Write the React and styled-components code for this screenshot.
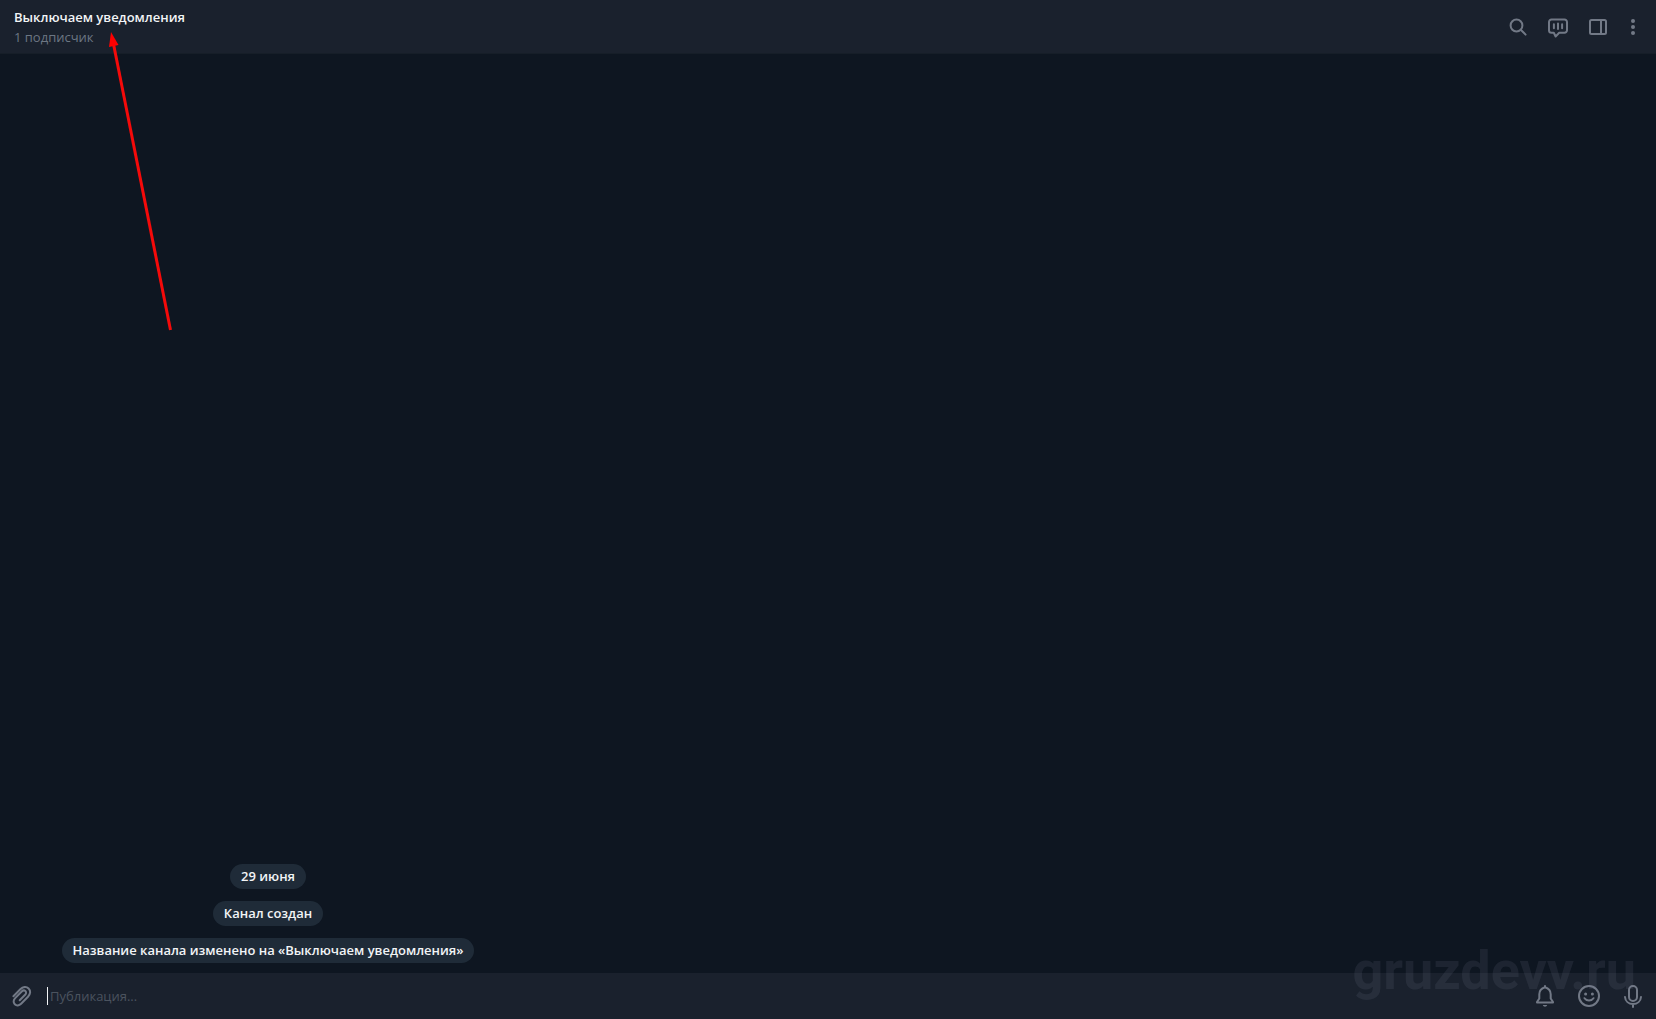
import { useState } from 'react';
import styled, { createGlobalStyle } from 'styled-components';

const GlobalStyle = createGlobalStyle`
  * {
    box-sizing: border-box;
  }
  body {
    margin: 0;
    background: #0e1621;
    font-family: 'Open Sans', 'Noto Sans', sans-serif;
    font-size: 13px;
    line-height: 18px;
  }
`;

const Page = styled.div`
  position: relative;
  display: flex;
  flex-direction: column;
  min-height: 100vh;
`;

const Header = styled.header`
  display: flex;
  align-items: center;
  justify-content: space-between;
  height: 54px;
  padding: 0 8px 0 14px;
  background: #1a212d;
  border-bottom: 1px solid #161e28;
`;

const ChannelInfo = styled.div`
  display: flex;
  flex-direction: column;
  gap: 2px;
`;

const Title = styled.h1`
  margin: 0;
  font-size: 13px;
  font-weight: 600;
  color: #f2f4f6;
`;

const Subtitle = styled.span`
  color: #6c7683;
`;

const Buttons = styled.div`
  display: flex;
  align-items: center;
`;

const IconButton = styled.button`
  display: flex;
  align-items: center;
  justify-content: center;
  width: ${({ $width }) => $width}px;
  height: 40px;
  padding: 0;
  border: none;
  background: none;
  color: #727986;
  cursor: pointer;
`;

const Icon = styled.svg`
  flex: none;
  width: 24px;
  height: 24px;
  fill: none;
  stroke: currentColor;
  stroke-width: 2;
  stroke-linecap: round;
  stroke-linejoin: round;
`;

const History = styled.main`
  display: flex;
  flex: 1;
  flex-direction: column;
  justify-content: flex-end;
  align-items: flex-start;
  padding-bottom: 10px;
`;

const MessageList = styled.div`
  display: flex;
  flex-direction: column;
  align-items: center;
  gap: 12px;
  width: 100%;
  max-width: 536px;
`;

const ServiceMessage = styled.div`
  padding: 3px 11px 4px;
  border-radius: 13px;
  background: #1f2b38;
  color: #f2f4f6;
  font-weight: 600;
`;

const Composer = styled.form`
  display: flex;
  align-items: center;
  height: 46px;
  padding: 0 1px;
  background: #1a212d;
`;

const Caret = styled.span`
  width: 1px;
  height: 18px;
  margin-left: 4px;
  background: #f2f4f6;
`;

const MessageInput = styled.input`
  flex: 1;
  min-width: 0;
  height: 40px;
  padding: 0 2px;
  border: none;
  outline: none;
  background: none;
  color: #f2f4f6;
  font: inherit;
  &::placeholder {
    color: #4b535f;
    opacity: 1;
  }
`;

const Arrow = styled.svg`
  position: absolute;
  top: 32px;
  left: 100px;
  width: 80px;
  height: 300px;
  pointer-events: none;
`;

const Watermark = styled.div`
  position: absolute;
  right: 20px;
  bottom: 18px;
  color: rgba(120, 130, 150, 0.14);
  font-family: Roboto, 'Liberation Sans', sans-serif;
  font-size: 54px;
  font-weight: 700;
  line-height: 60px;
  pointer-events: none;
`;

const SearchIcon = () => (
  <Icon viewBox="0 0 24 24">
    <circle cx="10.5" cy="10.5" r="5.9" />
    <path d="M15 15l4.6 4.6" />
  </Icon>
);

const VoiceChatIcon = () => (
  <Icon viewBox="0 0 24 24">
    <path d="M5.500 4.500h13a2.500 2.500 0 0 1 2.500 2.500v8.300a2.500 2.500 0 0 1-2.500 2.500h-5.300l-3.600 3.700-1.800-3.700H5.500A2.500 2.500 0 0 1 3 15.300V7A2.500 2.500 0 0 1 5.500 4.500z" />
    <path d="M7.900 9.300v4M12 8.500v5.600M16.100 9.300v4" />
  </Icon>
);

const SidePanelIcon = () => (
  <Icon viewBox="0 0 24 24">
    <rect x="4" y="5" width="16" height="14" rx="1.5" />
    <path d="M15 5v14" />
  </Icon>
);

const MenuIcon = () => (
  <Icon viewBox="0 0 24 24">
    <g fill="currentColor" stroke="none">
      <circle cx="12" cy="6" r="2" />
      <circle cx="12" cy="12" r="2" />
      <circle cx="12" cy="18" r="2" />
    </g>
  </Icon>
);

const AttachIcon = () => (
  <Icon viewBox="0 0 24 24">
    <path d="M3.4 12.2l6.9-6.9c2.6-2.6 6-3 8.3-.8s2 5.6-.6 8.2l-6.9 7.1c-1.9 1.9-4.6 2.2-6.3.5s-1.5-4.3.4-6.2l6.5-6.6c1.2-1.2 2.7-1.3 3.7-.4s.9 2.5-.3 3.7l-5.4 5.5" />
  </Icon>
);

const BellIcon = () => (
  <Icon viewBox="0 0 24 24">
    <path d="M12 3.2c-3.6 1-5.7 3.5-5.7 7.1v4.2L4 18v.5h16V18l-2.3-3.5v-4.2c0-3.6-2.1-6.1-5.7-7.1z" />
    <path d="M12 2v1" />
    <path
      d="M9.8 21h4.4c-.4 1.2-1.2 1.7-2.2 1.7s-1.8-.5-2.2-1.7z"
      fill="currentColor"
      stroke="none"
    />
  </Icon>
);

const SmileIcon = () => (
  <Icon viewBox="0 0 24 24">
    <circle cx="12" cy="12" r="10" />
    <path d="M7.5 14.2c2 3 7 3 9 0" />
    <g fill="currentColor" stroke="none">
      <circle cx="8.6" cy="10" r="1.5" />
      <circle cx="15.4" cy="10" r="1.5" />
    </g>
  </Icon>
);

const MicIcon = () => (
  <Icon viewBox="0 0 24 24">
    <rect x="8" y="2" width="8" height="15" rx="4" />
    <path d="M4 13c.3 4.2 3.6 7 8 7s7.7-2.8 8-7M12 20v3" />
  </Icon>
);

const App = () => {
  const [message, setMessage] = useState('');

  const handlerMessage = (e) => {
    setMessage(e.target.value);
  };

  return (
    <>
      <GlobalStyle />
      <Page>
        <Header>
          <ChannelInfo>
            <Title>Выключаем уведомления</Title>
            <Subtitle>1 подписчик</Subtitle>
          </ChannelInfo>
          <Buttons>
            <IconButton $width={40} type="button" aria-label="Поиск">
              <SearchIcon />
            </IconButton>
            <IconButton $width={40} type="button" aria-label="Трансляция">
              <VoiceChatIcon />
            </IconButton>
            <IconButton $width={40} type="button" aria-label="Информация">
              <SidePanelIcon />
            </IconButton>
            <IconButton $width={30} type="button" aria-label="Меню">
              <MenuIcon />
            </IconButton>
          </Buttons>
        </Header>

        <History>
          <MessageList>
            <ServiceMessage>29 июня</ServiceMessage>
            <ServiceMessage>Канал создан</ServiceMessage>
            <ServiceMessage>
              Название канала изменено на «Выключаем уведомления»
            </ServiceMessage>
          </MessageList>
        </History>

        <Composer onSubmit={(e) => e.preventDefault()}>
          <IconButton $width={42} type="button" aria-label="Прикрепить">
            <AttachIcon />
          </IconButton>
          <Caret />
          <MessageInput
            aria-label="Публикация"
            placeholder="Публикация..."
            value={message}
            onChange={handlerMessage}
          />
          <IconButton $width={44} type="button" aria-label="Уведомления">
            <BellIcon />
          </IconButton>
          <IconButton $width={44} type="button" aria-label="Эмодзи">
            <SmileIcon />
          </IconButton>
          <IconButton $width={44} type="button" aria-label="Голосовое">
            <MicIcon />
          </IconButton>
        </Composer>

        <Arrow viewBox="0 0 80 300" aria-hidden="true">
          <path d="M13.5 12L70.5 298" stroke="#f50a0a" strokeWidth="3" />
          <path d="M11 0L18.5 13L9 15z" fill="#ff0000" />
        </Arrow>
        <Watermark>gruzdevv.ru</Watermark>
      </Page>
    </>
  );
};

export default App;
